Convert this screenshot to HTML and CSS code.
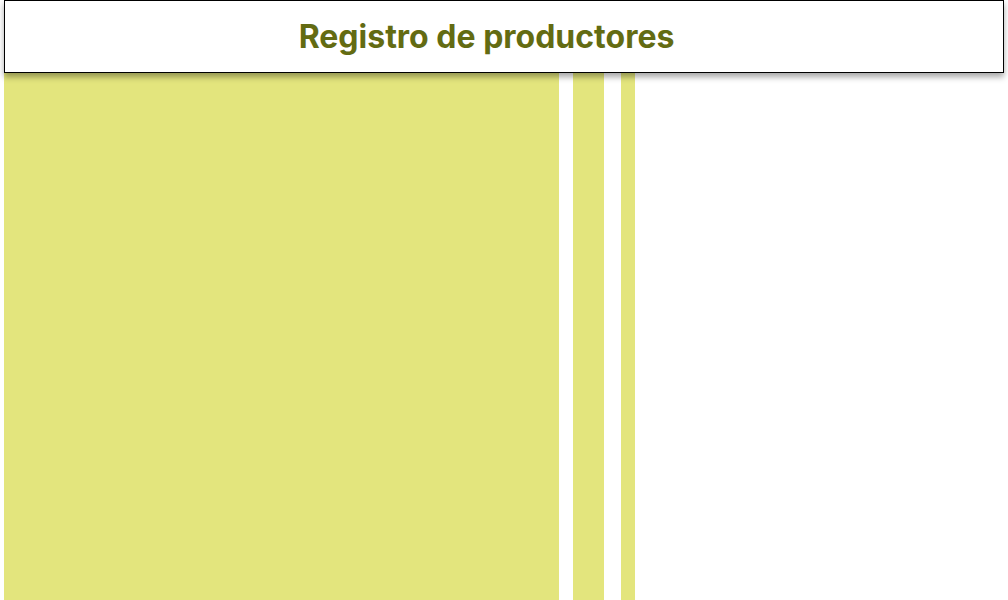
FILE: index.html
```html
<!DOCTYPE html>
<html lang="es">
<head>
<meta charset="utf-8">
<title>Registro de productores</title>
<link rel="stylesheet" href="styles.css">
</head>
<body>
<div class="page">
  <header class="header">
    <h1 class="title">Registro de productores</h1>
  </header>
  <main class="columns">
    <div class="col col-main"></div>
    <div class="col col-mid"></div>
    <div class="col col-thin"></div>
  </main>
</div>
</body>
</html>
```
FILE: styles.css
```css
html, body {
  margin: 0;
  padding: 0;
  background: #ffffff;
  height: 100%;
  overflow: hidden;
}
.page {
  padding: 0 4px;
  height: 100%;
  display: flex;
  flex-direction: column;
}
.header {
  position: relative;
  z-index: 1;
  height: 71px;
  border: 1px solid #000;
  background: #fff;
  box-shadow: 0 4px 6px rgba(0,0,0,0.35);
  display: flex;
  align-items: center;
  justify-content: center;
  padding-right: 35px;
}
.title {
  margin: 0;
  font-family: Inter, Roboto, "Liberation Sans", sans-serif;
  font-weight: 700;
  font-size: 32px;
  color: #636b12;
}
.columns {
  flex: 1;
  display: flex;
}
.col {
  background: #e3e57d;
}
.col-main { width: 555px; }
.col-mid { width: 31px; margin-left: 14px; }
.col-thin { width: 14px; margin-left: 17px; }
```
